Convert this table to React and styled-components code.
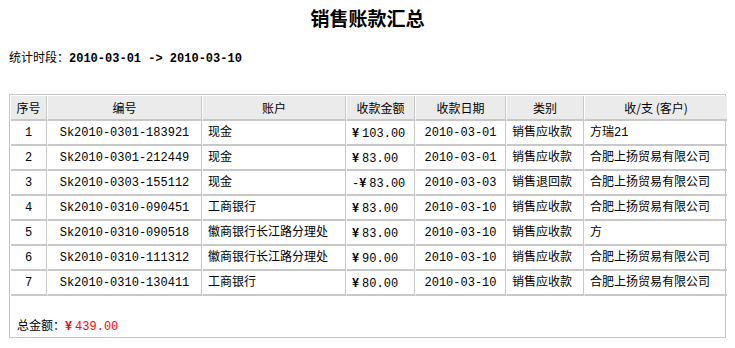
import React from "react";
import styled, { createGlobalStyle } from "styled-components";

const rows = [
  ["1", "Sk2010-0301-183921", "现金", "", "103.00", "2010-03-01", "销售应收款", "方瑞21"],
  ["2", "Sk2010-0301-212449", "现金", "", "83.00", "2010-03-01", "销售应收款", "合肥上扬贸易有限公司"],
  ["3", "Sk2010-0303-155112", "现金", "-", "83.00", "2010-03-03", "销售退回款", "合肥上扬贸易有限公司"],
  ["4", "Sk2010-0310-090451", "工商银行", "", "83.00", "2010-03-10", "销售应收款", "合肥上扬贸易有限公司"],
  ["5", "Sk2010-0310-090518", "徽商银行长江路分理处", "", "83.00", "2010-03-10", "销售应收款", "方"],
  ["6", "Sk2010-0310-111312", "徽商银行长江路分理处", "", "90.00", "2010-03-10", "销售应收款", "合肥上扬贸易有限公司"],
  ["7", "Sk2010-0310-130411", "工商银行", "", "80.00", "2010-03-10", "销售应收款", "合肥上扬贸易有限公司"],
];

const columns = [
  { title: "序号", width: 36 },
  { title: "编号", width: 155 },
  { title: "账户", width: 144 },
  { title: "收款金额", width: 69 },
  { title: "收款日期", width: 91 },
  { title: "类别", width: 78 },
  { title: "收/支 (客户)", width: 143 },
];

const App = () => {
  return (
    <>
      <GlobalStyle />
      <Page>
        <Title>销售账款汇总</Title>
        <Period>
          统计时段：<Dates>2010-03-01 -&gt; 2010-03-10</Dates>
        </Period>
        <Panel>
          <Table>
            <colgroup>
              {columns.map((c) => (
                <col key={c.title} style={{ width: c.width }} />
              ))}
            </colgroup>
            <thead>
              <tr>
                {columns.map((c) => (
                  <Th key={c.title}>{c.title}</Th>
                ))}
              </tr>
            </thead>
            <tbody>
              {rows.map((r) => (
                <tr key={r[0]}>
                  <Td $align="center">{r[0]}</Td>
                  <Td $align="center">{r[1]}</Td>
                  <Td>{r[2]}</Td>
                  <Td>
                    {r[3]}
                    <Yen>¥</Yen>
                    {r[4]}
                  </Td>
                  <Td $align="center">{r[5]}</Td>
                  <Td>{r[6]}</Td>
                  <Td>{r[7]}</Td>
                </tr>
              ))}
            </tbody>
          </Table>
          <Footer>
            总金额：
            <Total>
              <Yen>¥</Yen>439.00
            </Total>
          </Footer>
        </Panel>
      </Page>
    </>
  );
};

export default App;

const GlobalStyle = createGlobalStyle`
  body {
    margin: 0;
    background: #fff;
    color: #000;
    font-family: "Liberation Mono", "Noto Sans CJK SC", monospace;
    font-size: 12px;
  }
`;

const Page = styled.div`
  width: 735px;
  padding-top: 8px;
`;

const Title = styled.h1`
  margin: 0;
  text-align: center;
  font-family: "Noto Sans CJK SC", sans-serif;
  font-size: 19px;
  font-weight: bold;
  line-height: 20px;
`;

const Period = styled.div`
  margin: 21px 0 0 9px;
  line-height: 16px;
  font-family: "Noto Sans CJK SC", sans-serif;
`;

const Dates = styled.span`
  font-family: "Liberation Mono", monospace;
  font-weight: bold;
`;

const Panel = styled.div`
  margin: 27px 9px 0 9px;
  border: 1px solid #c4c4c4;
  padding: 1px;
`;

const Table = styled.table`
  width: 100%;
  table-layout: fixed;
  border-collapse: separate;
  border-spacing: 0;
  line-height: 16px;
`;

const Th = styled.th`
  height: 23px;
  padding: 0;
  background: #ebebeb;
  font-weight: normal;
  text-align: center;
  font-family: "Noto Sans CJK SC", sans-serif;
  border-bottom: 2px solid #c8c8c8;
  border-right: 1px solid #c8c8c8;
  border-left: 1px solid #fff;

  &:first-child {
    border-left: none;
  }
  &:last-child {
    border-right: none;
  }
`;

const Td = styled.td`
  height: 23px;
  padding: 0 5px;
  text-align: ${(p) => p.$align || "left"};
  white-space: nowrap;
  overflow: hidden;
  border-bottom: 2px solid #c8c8c8;
  border-right: 1px solid #c8c8c8;
  border-left: 1px solid #fff;

  &:first-child {
    border-left: none;
  }
  &:last-child {
    border-right: none;
  }
`;

const Yen = styled.span`
  font-family: "Noto Sans CJK SC", sans-serif;
  font-weight: bold;
  margin-right: 3px;
`;

const Footer = styled.div`
  height: 40px;
  box-sizing: border-box;
  padding: 21px 0 0 6px;
  line-height: 16px;
  font-family: "Noto Sans CJK SC", sans-serif;
`;

const Total = styled.span`
  color: #f00;
  font-family: "Liberation Mono", monospace;
`;
